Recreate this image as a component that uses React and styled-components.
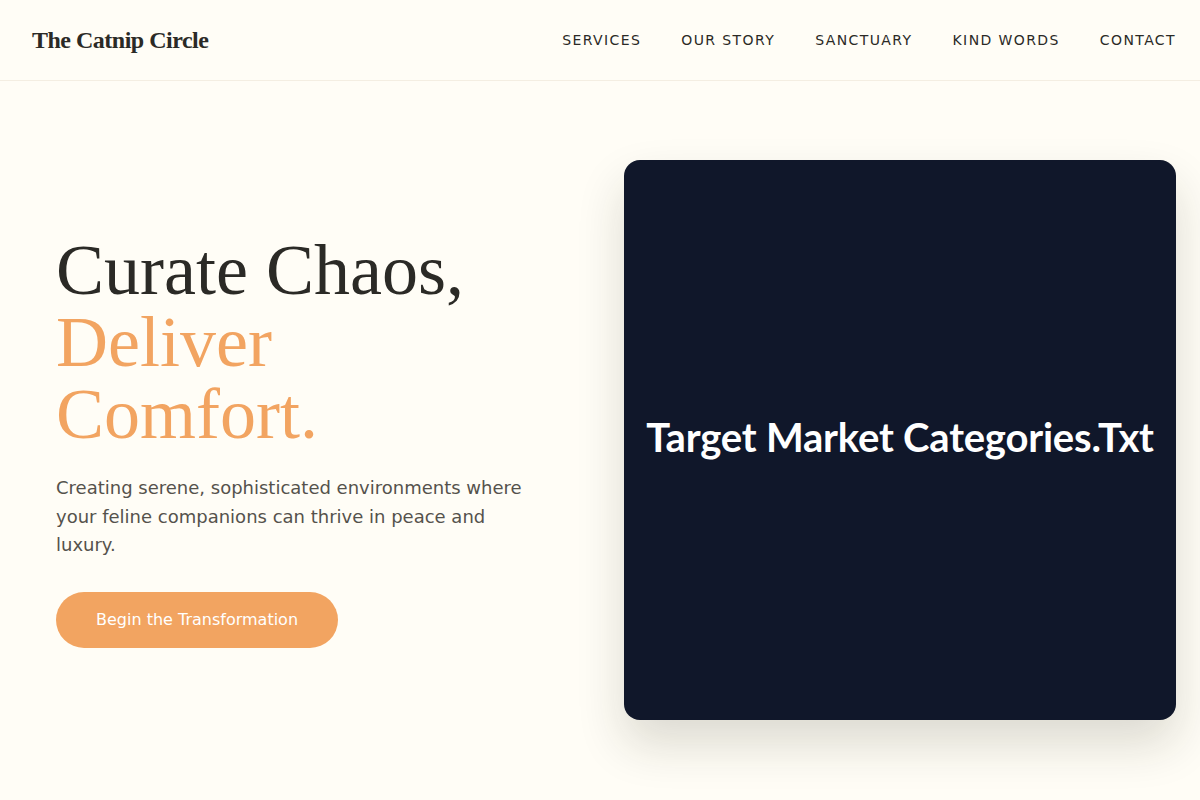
import React from "react";
import styled, { createGlobalStyle } from "styled-components";

const Global = createGlobalStyle`
  html, body { margin: 0; padding: 0; }
  body {
    background: #fffdf6;
    font-family: "DejaVu Sans", sans-serif;
    color: #2b2a26;
  }
  * { box-sizing: border-box; }
`;

const Page = styled.div`
  min-height: 800px;
  background: #fffdf6;
`;

const Header = styled.header`
  height: 81px;
  display: flex;
  align-items: center;
  justify-content: space-between;
  padding: 0 24px 0 32px;
  border-bottom: 1px solid #f4eee2;
`;

const Logo = styled.div`
  font-family: "Liberation Serif", serif;
  font-weight: 700;
  font-size: 24px;
  letter-spacing: -0.5px;
  color: #2b2a26;
`;

const Nav = styled.nav`
  display: flex;
  gap: 40px;
`;

const NavLink = styled.a`
  font-family: "DejaVu Sans", sans-serif;
  font-size: 14px;
  letter-spacing: 0.1em;
  text-transform: uppercase;
  color: #2b2a26;
  text-decoration: none;
`;

const Hero = styled.section`
  display: grid;
  grid-template-columns: 1fr 1fr;
  gap: 48px;
  align-items: center;
  padding: 79px 24px 80px;
`;

const Copy = styled.div`
  padding-left: 32px;
  padding-top: 2px;
`;

const Title = styled.h1`
  margin: 0;
  font-family: "Liberation Serif", serif;
  font-weight: 400;
  font-size: 72px;
  line-height: 1;
  color: #2b2a26;
`;

const Accent = styled.span`
  color: #f2a461;
`;

const Lead = styled.p`
  margin: 24px 0 0;
  max-width: 480px;
  font-size: 18px;
  line-height: 1.6;
  color: #55524c;
`;

const Cta = styled.button`
  margin-top: 32px;
  border: none;
  border-radius: 999px;
  background: #f2a461;
  color: #ffffff;
  font-family: "DejaVu Sans", sans-serif;
  font-size: 16px;
  line-height: 24px;
  padding: 16px 40px;
  cursor: pointer;
`;

const Card = styled.div`
  height: 560px;
  border-radius: 16px;
  background: #10172a;
  box-shadow: 0 24px 48px rgba(40, 36, 20, 0.16);
  display: flex;
  align-items: center;
  justify-content: center;
`;

const CardText = styled.div`
  font-family: Lato, sans-serif;
  font-weight: 700;
  font-size: 40px;
  letter-spacing: -0.2px;
  line-height: 1.2;
  margin-top: -6px;
  color: #ffffff;
`;

export default function App() {
  return (
    <Page>
      <Global />
      <Header>
        <Logo>The Catnip Circle</Logo>
        <Nav>
          <NavLink href="#">Services</NavLink>
          <NavLink href="#">Our Story</NavLink>
          <NavLink href="#">Sanctuary</NavLink>
          <NavLink href="#">Kind Words</NavLink>
          <NavLink href="#">Contact</NavLink>
        </Nav>
      </Header>
      <Hero>
        <Copy>
          <Title>
            Curate Chaos,
            <br />
            <Accent>
              Deliver
              <br />
              Comfort.
            </Accent>
          </Title>
          <Lead>
            Creating serene, sophisticated environments where your feline
            companions can thrive in peace and luxury.
          </Lead>
          <Cta>Begin the Transformation</Cta>
        </Copy>
        <Card>
          <CardText>Target Market Categories.Txt</CardText>
        </Card>
      </Hero>
    </Page>
  );
}
